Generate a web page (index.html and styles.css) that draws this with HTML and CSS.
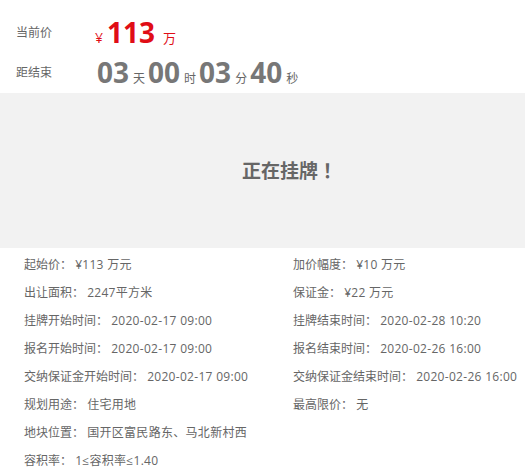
FILE: index.html
```html
<!DOCTYPE html>
<html lang="zh-CN">
<head>
<meta charset="utf-8">
<link rel="stylesheet" href="styles.css">
</head>
<body>
<div class="top">
  <div class="row">
    <span class="label">当前价</span>
    <span class="price"><span class="yen">¥</span><span class="num">113</span><span class="wan">万</span></span>
  </div>
  <div class="row">
    <span class="label">距结束</span>
    <span class="count">
      <span class="big">03</span><span class="unit">天</span><span class="big">00</span><span class="unit">时</span><span class="big">03</span><span class="unit">分</span><span class="big">40</span><span class="unit">秒</span>
    </span>
  </div>
</div>
<div class="status"><span class="status-text">正在挂牌<span class="bang" lang="ja">！</span></span></div>
<div class="details">
  <div class="item">起始价： <span class="v">¥113 万元</span></div>
  <div class="item">加价幅度： <span class="v">¥10 万元</span></div>
  <div class="item">出让面积： <span class="v">2247平方米</span></div>
  <div class="item">保证金： <span class="v">¥22 万元</span></div>
  <div class="item">挂牌开始时间： <span class="v">2020-02-17 09:00</span></div>
  <div class="item">挂牌结束时间： <span class="v">2020-02-28 10:20</span></div>
  <div class="item">报名开始时间： <span class="v">2020-02-17 09:00</span></div>
  <div class="item">报名结束时间： <span class="v">2020-02-26 16:00</span></div>
  <div class="item">交纳保证金开始时间： <span class="v">2020-02-17 09:00</span></div>
  <div class="item">交纳保证金结束时间： <span class="v">2020-02-26 16:00</span></div>
  <div class="item">规划用途： <span class="v">住宅用地</span></div>
  <div class="item">最高限价： <span class="v">无</span></div>
  <div class="item full">地块位置： <span class="v">国开区富民路东、马北新村西</span></div>
  <div class="item full">容积率： <span class="v">1≤容积率≤1.40</span></div>
</div>
</body>
</html>
```
FILE: styles.css
```css
html, body {
  margin: 0;
  padding: 0;
  background: #fff;
  font-family: "Open Sans", "Noto Sans CJK SC", sans-serif;
  color: #666;
  font-size: 12px;
}
.top {
  padding: 12px 0 1px 16px;
}
.row {
  height: 40px;
  display: flex;
  align-items: center;
}
.label {
  width: 79px;
  flex: none;
  font-size: 12px;
  color: #666;
}
.price {
  display: flex;
  align-items: baseline;
  color: #e00d16;
}
.yen {
  font-size: 14px;
  margin-right: 4px;
}
.num {
  font-size: 28px;
  font-weight: 700;
  line-height: 1;
}
.wan {
  font-size: 13px;
  margin-left: 8px;
}
.count {
  display: flex;
  align-items: baseline;
  margin-left: 2px;
  color: #777;
}
.big {
  font-size: 28px;
  font-weight: 700;
  line-height: 1;
}
.unit {
  font-size: 12px;
  margin: 0 3px 0 4px;
  color: #666;
}
.status {
  background: #f2f2f2;
  height: 155px;
  display: flex;
  align-items: center;
  justify-content: center;
  padding: 0 0 2px 54px;
  box-sizing: border-box;
}
.status-text {
  font-size: 19px;
  font-weight: 700;
  color: #666;
}
.bang {
  font-family: "Noto Sans CJK JP", sans-serif;
}
.details {
  display: grid;
  grid-template-columns: 269px 1fr;
  padding: 3px 0 0 24px;
}
.item {
  height: 28px;
  line-height: 28px;
  white-space: nowrap;
  color: #666;
}
.v {
  letter-spacing: 0.3px;
}
.full {
  grid-column: 1 / -1;
}
```
